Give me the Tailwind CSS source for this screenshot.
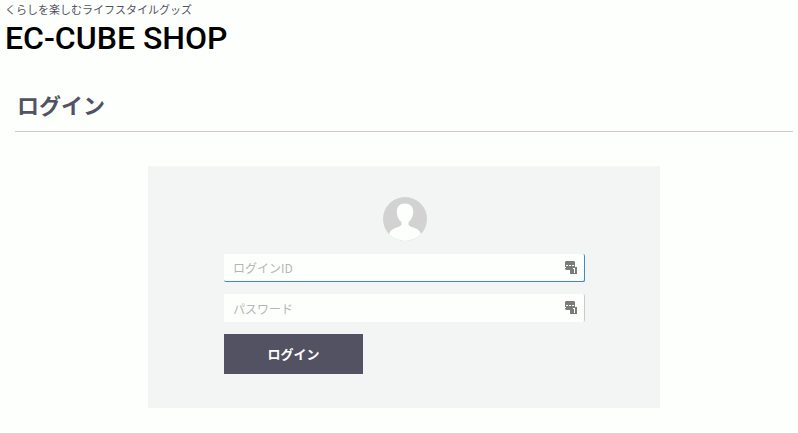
<!DOCTYPE html>
<html lang="ja">
  <head>
    <meta charset="UTF-8" />
    <meta name="viewport" content="width=device-width, initial-scale=1.0" />
    <title>EC-CUBE SHOP / ログイン</title>
    <script src="https://cdn.jsdelivr.net/npm/@tailwindcss/browser@4"></script>
  </head>
  <body
    class="min-h-screen bg-[#fdfffc] text-[#525263] font-['Noto_Sans_CJK_JP',sans-serif]"
  >
    <header class="px-[5px] pt-px">
      <p class="text-[11px] leading-4">くらしを楽しむライフスタイルグッズ</p>
      <h1
        class="pt-px text-[32px] leading-10 font-medium text-black font-[Roboto,sans-serif]"
      >
        <a href="#" class="block">EC-CUBE SHOP</a>
      </h1>
    </header>

    <main class="pl-[15px] pr-[5px] pt-[30px]">
      <h2
        class="border-b border-[#ccc] pl-0.5 pb-[11px] text-[22px] leading-8 font-bold"
      >
        ログイン
      </h2>

      <form
        class="mx-auto mt-[34px] flex w-full max-w-[512px] flex-col bg-[#f3f4f4] pl-[76px] pr-[75px] pt-[31px] pb-[34px]"
      >
        <svg class="mx-auto size-11" viewBox="0 0 44 44" aria-hidden="true">
          <circle cx="22" cy="22" r="22" fill="#d2d2d3" />
          <path
            d="M22 6.500c-5.500 0-8.500 3.500-8.200 8.500.1 4.500 2 8 4.700 10.200v2.500c-.5 1.300-2.500 2-5 2.800C10 31.500 7.500 33 6 37A22 22 0 0 0 38 37C36.500 33 34 31.500 30.500 30.500c-2.500-.8-4.500-1.500-5-2.800v-2.500c2.700-2.200 4.600-5.700 4.700-10.200.3-5-2.700-8.500-8.200-8.500z"
            fill="#fdfffc"
          />
        </svg>

        <div class="relative mt-[13px]">
          <input
            type="text"
            aria-label="ログインID"
            placeholder="ログインID"
            class="block h-7 w-full rounded-[2px] border-r border-b border-[#3c8dc5] bg-[#fdfffc] pl-[9px] pr-8 text-xs outline-none placeholder:text-[#b5b5b5]"
          />
          <svg
            class="absolute top-[7px] right-2 h-[13px] w-3"
            viewBox="0 0 12 13"
            aria-hidden="true"
          >
            <path d="M1 0h8l1 1v8H1L0 8V1z" fill="#7b7b7b" />
            <path d="M1 4h2v1H1zM4 4h2v1H4zM7 4h2v1H7zM0 6h1v1H0z" fill="#fff" />
            <path d="M5 6h7v7H5z" fill="#7b7b7b" />
            <path d="M8 7h2v5H9V8H8z" fill="#fff" />
          </svg>
        </div>

        <div class="relative mt-3">
          <input
            type="password"
            aria-label="パスワード"
            placeholder="パスワード"
            class="block h-7 w-full rounded-[2px] border-r border-[#c5cccc] bg-[#fdfffc] pl-[9px] pr-8 text-xs outline-none placeholder:text-[#b5b5b5]"
          />
          <svg
            class="absolute top-[7px] right-2 h-[13px] w-3"
            viewBox="0 0 12 13"
            aria-hidden="true"
          >
            <path d="M1 0h8l1 1v8H1L0 8V1z" fill="#7b7b7b" />
            <path d="M1 4h2v1H1zM4 4h2v1H4zM7 4h2v1H7zM0 6h1v1H0z" fill="#fff" />
            <path d="M5 6h7v7H5z" fill="#7b7b7b" />
            <path d="M8 7h2v5H9V8H8z" fill="#fff" />
          </svg>
        </div>

        <button
          type="button"
          class="mt-3 h-10 w-[139px] bg-[#525263] text-[13px] font-bold text-white"
        >
          ログイン
        </button>
      </form>
    </main>
  </body>
</html>
